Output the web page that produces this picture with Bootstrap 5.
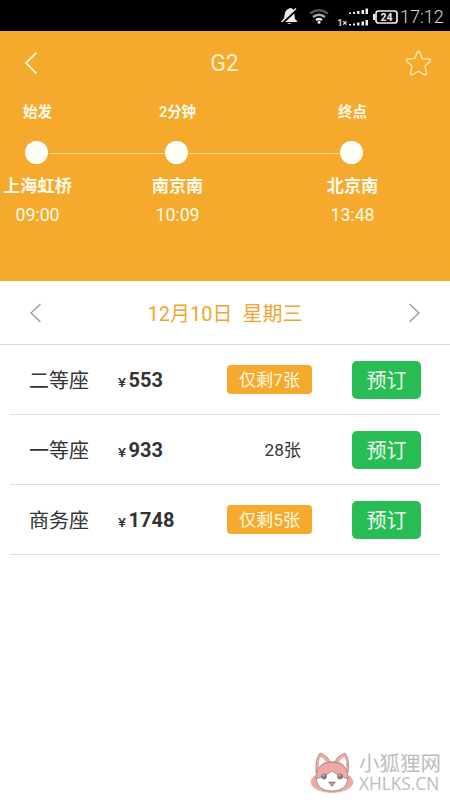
<!DOCTYPE html>
<html lang="zh-CN">
<head>
<meta charset="utf-8">
<meta name="viewport" content="width=device-width, initial-scale=1">
<title>G2</title>
<link href="https://cdn.jsdelivr.net/npm/bootstrap@5.3.0/dist/css/bootstrap.min.css" rel="stylesheet">
<style>
body{font-family:Roboto,"Noto Sans CJK SC",sans-serif;background:#fff;color:#333;width:450px;height:800px;overflow:hidden;line-height:1}
svg{display:block;flex:none}
.status{height:31px;background:#000;color:#ddd;padding-right:7px}
.clock{font-size:18px;font-weight:300;width:43px;white-space:nowrap;margin-left:2px;padding-top:2px}
.hero{height:250px;background:#f6aa2d;color:#fffbea}
.topbar{height:64px;padding:0 18px 0 24px}
.title{font-size:23px;color:#fff3cf;padding:2px 0 0 5px}
.stops{display:grid;grid-template-columns:75px 65px 75px 100px 75px}
.stops>:nth-child(2){grid-column:3}
.stops>:nth-child(3){grid-column:5}
.note{font-size:14.5px;height:30px;line-height:30px;margin-top:3px}
.note .lat{font-weight:500}
.track{height:24px;padding-left:24.5px;margin-top:12px}
.dot{width:23px;height:23px;background:#fffffa}
.rail{height:1px;background:#fdd98c;margin:2px 1px 0}
.place{font-size:17.2px;height:30px;line-height:30px;margin-top:7px}
.time{font-size:17.7px;height:30px;line-height:30px;margin-top:-1px}
.datebar{height:64px;border-bottom:1px solid #ddd;padding:0 29px}
.day{font-size:20px;color:#f1a62f;white-space:pre;padding-top:2px}
.seat{height:70px;margin:0 10px;border-bottom:1px solid #ddd;padding:0 19px}
.kind{width:89px;font-size:20px;padding-top:2px}
.price{width:109px;font-size:20px}
.yen{font-size:13px;font-weight:500;margin-right:1.500px;display:inline-block;width:9px;transform:scaleX(1.150);transform-origin:left}
.left{width:85px;height:29px;line-height:31px;font-size:17.2px}
.total{padding-right:11px}
.few{background:#f6aa2d;color:#fff8e4;border-radius:4px}
.book{width:69px;height:38px;background:#27bc54;color:#f2fff2;font-size:20px;line-height:40px;border-radius:5px;margin-left:40px}
.book:hover{background:#22ab4b;color:#fff}
.brandmark{right:9px;bottom:5px;color:#bcbcc0}
.brand-cn{font-size:20.5px;line-height:23px;height:22px;margin-top:-2px}
.brand-en{font-family:"Open Sans",sans-serif;font-size:17.3px;line-height:17px;font-weight:500}
</style>
</head>
<body>
<header class="status d-flex align-items-center justify-content-end">
  <svg width="120" height="31" viewBox="0 0 120 31" fill="#eee">
    <path d="M4 22l2-4 1-5c1-4 4-4 5-5 2 0 3 1 4 3l1 8 2 2v1zM9 23h5l-3 1z"/>
    <path d="M4 23L19 9" stroke="#000" stroke-width="3"/><path d="M3.500 22L18 8.500" stroke="#eee" stroke-width="1.500"/>
    <g fill="none" stroke-width="2.300"><path d="M32 13.500q9-6.500 18 0" stroke="#555"/><path d="M35 17q6-4.500 12 0" stroke="#aaa"/><path d="M38 20q3-2 6 0" stroke="#eee"/></g><circle cx="41" cy="22.300" r="1.500"/>
    <path d="M71 12.500h2v1.500h-2zM75 12h2v2h-2zM79 11h2.500v3H79zM83.500 10H86v4h-2.500zM87.500 8.500H90V14h-2.500zM71 24h2v1.500h-2zM75 23.500h2v2h-2zM79 22.500h2.500v3H79zM83.500 21.500H86v4h-2.500zM87.500 20H90v5.500h-2.500z"/>
    <text x="59.500" y="26" font-size="8.500" font-weight="700">1×</text>
    <rect x="98" y="11" width="21" height="12" rx="2.500" fill="none" stroke="#eee" stroke-width="1.700"/><path d="M95 14h2v6h-2z"/>
    <text x="108.600" y="20.800" font-size="10.500" font-weight="700" text-anchor="middle">24</text>
  </svg>
  <span class="clock">17:12</span>
</header>
<section class="hero">
  <nav class="topbar d-flex align-items-center justify-content-between">
    <svg width="15" height="24" viewBox="0 0 15 24" fill="none" stroke="#fff3cf" stroke-width="1.800"><path d="M12.500 1.500L2 12l10.500 10.500"/></svg>
    <h1 class="title fw-normal m-0">G2</h1>
    <svg width="27" height="27" viewBox="0 0 27 27" fill="none" stroke="#ffedb8" stroke-width="1.300" stroke-linejoin="round"><path d="M13.500 1.500q1 0 1.300 1l2.500 6.200 7 .5q2.200.6.700 2.200l-5 4.500 1.500 7.500q0 2-2 1.300l-6-3.500-6 3.500q-2 .7-2-1.300L7 15.900l-5-4.500q-1.500-1.600.7-2.200l7-.5 2.500-6.200q.3-1 1.300-1z"/></svg>
  </nav>
  <div class="stops note text-center fw-bold"><span>始发</span><span><span class="lat">2</span>分钟</span><span>终点</span></div>
  <div class="track d-flex align-items-center">
    <span class="dot rounded-circle"></span><span class="rail" style="width:115px"></span>
    <span class="dot rounded-circle"></span><span class="rail" style="width:150px"></span>
    <span class="dot rounded-circle"></span>
  </div>
  <div class="stops place text-center fw-bold"><span class="text-nowrap">上海虹桥</span><span>南京南</span><span>北京南</span></div>
  <div class="stops time text-center"><span>09:00</span><span>10:09</span><span>13:48</span></div>
</section>
<main>
  <div class="datebar d-flex align-items-center justify-content-between">
    <svg width="13" height="20" viewBox="0 0 13 20" fill="none" stroke="#999" stroke-width="1.300"><path d="M11.500 1L2 10l9.500 9"/></svg>
    <span class="day">12月10日  星期三</span>
    <svg width="13" height="20" viewBox="0 0 13 20" fill="none" stroke="#999" stroke-width="1.300"><path d="M1.500 1L11 10l-9.500 9"/></svg>
  </div>
  <div class="seat d-flex align-items-center">
    <span class="kind">二等座</span><span class="price fw-bold"><span class="yen">¥</span>553</span>
    <span class="left few text-center">仅剩7张</span><a class="book btn p-0 border-0" href="#">预订</a>
  </div>
  <div class="seat d-flex align-items-center">
    <span class="kind">一等座</span><span class="price fw-bold"><span class="yen">¥</span>933</span>
    <span class="left total text-end">28张</span><a class="book btn p-0 border-0" href="#">预订</a>
  </div>
  <div class="seat d-flex align-items-center">
    <span class="kind">商务座</span><span class="price fw-bold"><span class="yen">¥</span>1748</span>
    <span class="left few text-center">仅剩5张</span><a class="book btn p-0 border-0" href="#">预订</a>
  </div>
</main>
<aside class="brandmark position-absolute d-flex align-items-center">
  <svg width="45" height="44" viewBox="0 0 45 44" stroke="#8d8080" stroke-width=".7">
    <ellipse cx="22" cy="31" rx="21" ry="10.500" fill="#efa9a6" stroke="#e4a5a2"/>
    <path d="M6 22Q5 8 10 2q8 3 10 9h5q2-6 10-9 5 6 3 20z" fill="#efa9a6"/>
    <path d="M9 13q-1-4 2-7 4 2 5 5-5 1-7 8zM36 13q1-4-2-7-4 2-5 5 5 1 7 8z" fill="#fff" stroke="none"/>
    <path d="M6 26Q7 11 22 11t16 15q-1 14-16 14T6 26z" fill="#efa9a6"/>
    <path d="M6 28q9-2 16-8 7 6 16 8-2 12-16 12T6 28z" fill="#fff"/>
    <circle cx="14" cy="25.500" r="2.600" fill="#777"/><circle cx="30" cy="25.500" r="2.600" fill="#777"/>
    <circle cx="13.500" cy="24.800" r=".8" fill="#fff" stroke="none"/><circle cx="29.500" cy="24.800" r=".8" fill="#fff" stroke="none"/>
    <path d="M18.500 31h7L22 35.500z" fill="#999"/>
  </svg>
  <div class="brand-text ms-1"><div class="brand-cn">小狐狸网</div><div class="brand-en">XHLKS.CN</div></div>
</aside>
<script src="https://cdn.jsdelivr.net/npm/bootstrap@5.3.0/dist/js/bootstrap.bundle.min.js"></script>
</body>
</html>
